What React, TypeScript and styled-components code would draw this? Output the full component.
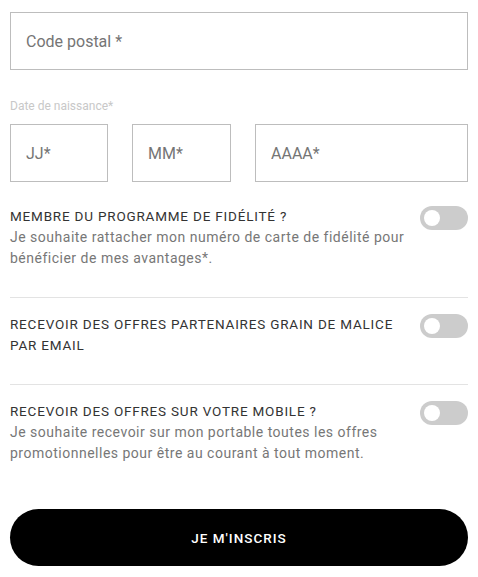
import React, { useState } from 'react';
import styled, { createGlobalStyle } from 'styled-components';

const GlobalStyle = createGlobalStyle`
  body {
    margin: 0;
    background: #fff;
    font-family: Roboto, 'Liberation Sans', sans-serif;
  }
  * { box-sizing: border-box; }
`;

type Option = {
  key: string;
  title: string;
  text?: string;
};

const options: Option[] = [
  {
    key: 'fidelite',
    title: 'Membre du programme de fidélité ?',
    text: 'Je souhaite rattacher mon numéro de carte de fidélité pour bénéficier de mes avantages*.',
  },
  {
    key: 'partenaires',
    title: 'Recevoir des offres partenaires Grain de Malice par email',
  },
  {
    key: 'mobile',
    title: 'Recevoir des offres sur votre mobile ?',
    text: 'Je souhaite recevoir sur mon portable toutes les offres promotionnelles pour être au courant à tout moment.',
  },
];

const Switch: React.FC<{ on: boolean; onToggle: () => void }> = ({ on, onToggle }) => (
  <Track $on={on} onClick={onToggle} role="switch" aria-checked={on}>
    <Knob $on={on} />
  </Track>
);

const App: React.FC = () => {
  const [checked, setChecked] = useState<Record<string, boolean>>({});

  return (
    <>
      <GlobalStyle />
      <Form onSubmit={(e) => e.preventDefault()}>
        <Input placeholder="Code postal *" />

        <DateGroup>
          <DateLabel>Date de naissance*</DateLabel>
          <DateRow>
            <Input placeholder="JJ*" $width="98px" />
            <Input placeholder="MM*" $width="99px" />
            <Input placeholder="AAAA*" />
          </DateRow>
        </DateGroup>

        <Options>
          {options.map((opt) => (
            <OptionRow key={opt.key}>
              <OptionText>
                <OptionTitle>{opt.title}</OptionTitle>
                {opt.text && <OptionDesc>{opt.text}</OptionDesc>}
              </OptionText>
              <Switch
                on={!!checked[opt.key]}
                onToggle={() => setChecked((c) => ({ ...c, [opt.key]: !c[opt.key] }))}
              />
            </OptionRow>
          ))}
        </Options>

        <Submit type="submit">Je m'inscris</Submit>
      </Form>
    </>
  );
};

const Form = styled.form`
  display: flex;
  flex-direction: column;
  padding: 12px 10px;
  width: 478px;
`;

const Input = styled.input<{ $width?: string }>`
  height: 58px;
  border: 1px solid #bdbdbd;
  border-radius: 0;
  padding: 0 15px;
  font-family: Roboto, 'Liberation Sans', sans-serif;
  font-size: 16px;
  color: #333;
  outline: none;
  width: ${(p) => p.$width ?? '100%'};
  flex: ${(p) => (p.$width ? '0 0 auto' : '1 1 auto')};
  min-width: 0;

  &::placeholder {
    color: #757575;
  }
`;

const DateGroup = styled.div`
  margin-top: 28px;
  display: flex;
  flex-direction: column;
`;

const DateLabel = styled.span`
  font-size: 12px;
  color: #c8c8c8;
  line-height: 16px;
  margin-bottom: 10px;
`;

const DateRow = styled.div`
  display: flex;
  gap: 24px;
`;

const Options = styled.div`
  margin-top: 24px;
  display: flex;
  flex-direction: column;
`;

const OptionRow = styled.div`
  display: flex;
  justify-content: space-between;
  align-items: flex-start;
  gap: 12px;
  padding: 0 0 28px;

  & + & {
    border-top: 1px solid #e3e3e3;
    padding-top: 16px;
  }

  &:last-child {
    padding-bottom: 0;
  }
`;

const OptionText = styled.div`
  display: flex;
  flex-direction: column;
  flex: 1;
`;

const OptionTitle = styled.span`
  font-size: 13.5px;
  line-height: 21px;
  text-transform: uppercase;
  color: #333;
  letter-spacing: 0.8px;
  max-width: 390px;
`;

const OptionDesc = styled.span`
  font-size: 14px;
  line-height: 21px;
  color: #777;
  letter-spacing: 0.5px;
`;

const Track = styled.button<{ $on: boolean }>`
  flex: 0 0 auto;
  width: 48px;
  height: 24px;
  border: none;
  padding: 0;
  border-radius: 12px;
  background: ${(p) => (p.$on ? '#000' : '#cccccc')};
  position: relative;
  cursor: pointer;
`;

const Knob = styled.span<{ $on: boolean }>`
  position: absolute;
  top: 4px;
  left: ${(p) => (p.$on ? '28px' : '4px')};
  width: 16px;
  height: 16px;
  border-radius: 50%;
  background: #fff;
  transition: left 0.2s;
`;

const Submit = styled.button`
  margin-top: 45px;
  height: 57px;
  border: none;
  border-radius: 29px;
  background: #000;
  color: #fff;
  font-family: Roboto, 'Liberation Sans', sans-serif;
  font-size: 13.5px;
  font-weight: 500;
  letter-spacing: 1px;
  text-transform: uppercase;
  cursor: pointer;
`;

export default App;
